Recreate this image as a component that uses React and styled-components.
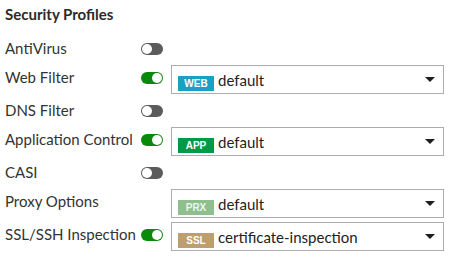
import styled, { createGlobalStyle } from 'styled-components'

const GlobalStyle = createGlobalStyle`
    body {
        margin: 0;
        background: #fff;
        font-family: Lato, "Open Sans", sans-serif;
        color: #333;
    }
`

const Panel = styled.div`
    padding: 5px 0 0 5px;
    width: 440px;
`

const Title = styled.h3`
    margin: 0 0 11px;
    font-size: 15px;
    font-weight: 700;
    line-height: 18px;
    color: #2b2b2b;
`

const Row = styled.div`
    display: flex;
    align-items: flex-start;
    padding: 2px 0;
`

const LabelCell = styled.div`
    display: flex;
    align-items: center;
    width: 166px;
    height: 25px;
    flex-shrink: 0;
`

const Label = styled.span`
    width: 136px;
    font-size: 15px;
    line-height: 25px;
    white-space: nowrap;
`

const Track = styled.span`
    position: relative;
    display: inline-block;
    width: 22px;
    height: 12px;
    border-radius: 6px;
    background: ${p => (p.$on ? '#0a8a0a' : '#5b5b5b')};
`

const Knob = styled.span`
    position: absolute;
    top: 1px;
    left: ${p => (p.$on ? '11px' : '1px')};
    width: 10px;
    height: 10px;
    border-radius: 50%;
    background: #fff;
`

const Select = styled.div`
    display: flex;
    align-items: center;
    box-sizing: border-box;
    width: 273px;
    height: 29px;
    padding: 0 8px 0 6px;
    border: 1px solid #acacac;
    background: #fff;
`

const Badge = styled.span`
    display: inline-block;
    width: 36px;
    height: 15px;
    margin-top: 7px;
    margin-right: 4px;
    background: ${p => p.$color};
    color: ${p => p.$text || '#fff'};
    font-family: "Liberation Sans", Arial, sans-serif;
    font-size: 10px;
    font-weight: 700;
    line-height: 15px;
    text-align: center;
`

const Value = styled.span`
    flex: 1;
    font-size: 15px;
    color: #222;
`

const Caret = styled.span`
    width: 0;
    height: 0;
    border-left: 5.5px solid transparent;
    border-right: 5.5px solid transparent;
    border-top: 5px solid #1e1e1e;
`

const profiles = [
    { name: 'AntiVirus', on: false },
    { name: 'Web Filter', on: true, badge: 'WEB', color: '#1aa0c0', value: 'default' },
    { name: 'DNS Filter', on: false },
    { name: 'Application Control', on: true, badge: 'APP', color: '#009a47', value: 'default' },
    { name: 'CASI', on: false },
    { name: 'Proxy Options', badge: 'PRX', color: '#8fbf8e', text: '#eef5ee', value: 'default', noToggle: true },
    { name: 'SSL/SSH Inspection', on: true, badge: 'SSL', color: '#bd9e6e', value: 'certificate-inspection' },
]

function Toggle({ on }) {
    return (
        <Track $on={on}>
            <Knob $on={on} />
        </Track>
    )
}

function App() {
    return (
        <Panel>
            <GlobalStyle />
            <Title>Security Profiles</Title>
            {profiles.map(p => (
                <Row key={p.name}>
                    <LabelCell>
                        <Label>{p.name}</Label>
                        {!p.noToggle && <Toggle on={p.on} />}
                    </LabelCell>
                    {p.badge && (
                        <Select>
                            <Badge $color={p.color} $text={p.text}>{p.badge}</Badge>
                            <Value>{p.value}</Value>
                            <Caret />
                        </Select>
                    )}
                </Row>
            ))}
        </Panel>
    )
}

export default App
